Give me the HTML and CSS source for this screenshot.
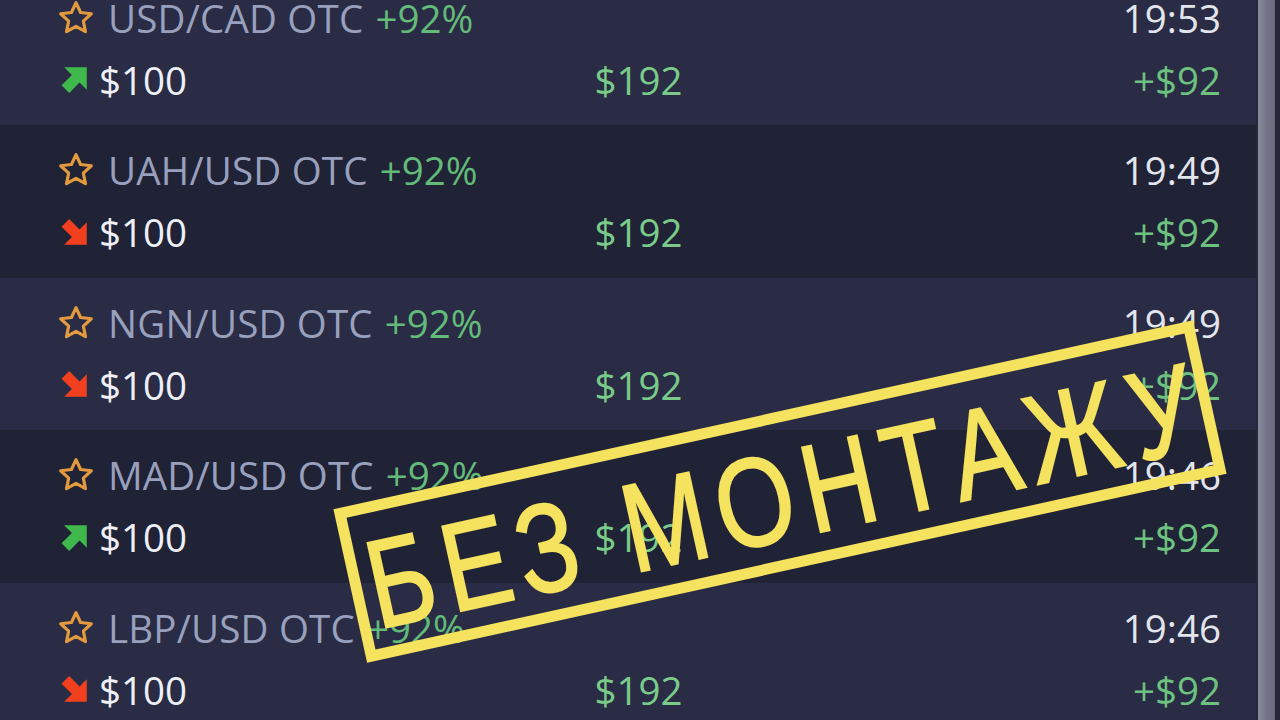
FILE: index.html
```html
<!DOCTYPE html>
<html lang="uk">
<head>
<meta charset="utf-8">
<title>Trades</title>
<link rel="stylesheet" href="styles.css">
</head>
<body>
<div class="screen">
  <div class="trades">
    <div class="trade-list">
      <div class="trade light">
        <div class="line">
          <div class="asset">
            <svg class="star" viewBox="0 0 24 24"><path d="M12 2.8l2.75 5.9 6.45.75-4.8 4.4 1.3 6.35L12 17l-5.7 3.2 1.3-6.35-4.8-4.4 6.45-.75z"/></svg>
            <span class="pair">USD/CAD OTC</span><span class="pct">+92%</span>
          </div>
          <span class="time">19:53</span>
        </div>
        <div class="line deal">
          <div class="stake">
            <svg class="dir up" viewBox="0 0 24 24"><path d="M4 2.5h17.5V20l-5.6-5.6-8 8L2 16.5l8-8z"/></svg>
            <span class="amount">$100</span>
          </div>
          <span class="payout">$192</span>
          <span class="profit">+$92</span>
        </div>
      </div>

      <div class="trade dark">
        <div class="line">
          <div class="asset">
            <svg class="star" viewBox="0 0 24 24"><path d="M12 2.8l2.75 5.9 6.45.75-4.8 4.4 1.3 6.35L12 17l-5.7 3.2 1.3-6.35-4.8-4.4 6.45-.75z"/></svg>
            <span class="pair">UAH/USD OTC</span><span class="pct">+92%</span>
          </div>
          <span class="time">19:49</span>
        </div>
        <div class="line deal">
          <div class="stake">
            <svg class="dir down" viewBox="0 0 24 24"><path d="M4 21.5h17.5V4l-5.6 5.6-8-8L2 7.5l8 8z"/></svg>
            <span class="amount">$100</span>
          </div>
          <span class="payout">$192</span>
          <span class="profit">+$92</span>
        </div>
      </div>

      <div class="trade light">
        <div class="line">
          <div class="asset">
            <svg class="star" viewBox="0 0 24 24"><path d="M12 2.8l2.75 5.9 6.45.75-4.8 4.4 1.3 6.35L12 17l-5.7 3.2 1.3-6.35-4.8-4.4 6.45-.75z"/></svg>
            <span class="pair">NGN/USD OTC</span><span class="pct">+92%</span>
          </div>
          <span class="time">19:49</span>
        </div>
        <div class="line deal">
          <div class="stake">
            <svg class="dir down" viewBox="0 0 24 24"><path d="M4 21.5h17.5V4l-5.6 5.6-8-8L2 7.5l8 8z"/></svg>
            <span class="amount">$100</span>
          </div>
          <span class="payout">$192</span>
          <span class="profit">+$92</span>
        </div>
      </div>

      <div class="trade dark">
        <div class="line">
          <div class="asset">
            <svg class="star" viewBox="0 0 24 24"><path d="M12 2.8l2.75 5.9 6.45.75-4.8 4.4 1.3 6.35L12 17l-5.7 3.2 1.3-6.35-4.8-4.4 6.45-.75z"/></svg>
            <span class="pair">MAD/USD OTC</span><span class="pct">+92%</span>
          </div>
          <span class="time">19:46</span>
        </div>
        <div class="line deal">
          <div class="stake">
            <svg class="dir up" viewBox="0 0 24 24"><path d="M4 2.5h17.5V20l-5.6-5.6-8 8L2 16.5l8-8z"/></svg>
            <span class="amount">$100</span>
          </div>
          <span class="payout">$192</span>
          <span class="profit">+$92</span>
        </div>
      </div>

      <div class="trade light">
        <div class="line">
          <div class="asset">
            <svg class="star" viewBox="0 0 24 24"><path d="M12 2.8l2.75 5.9 6.45.75-4.8 4.4 1.3 6.35L12 17l-5.7 3.2 1.3-6.35-4.8-4.4 6.45-.75z"/></svg>
            <span class="pair">LBP/USD OTC</span><span class="pct">+92%</span>
          </div>
          <span class="time">19:46</span>
        </div>
        <div class="line deal">
          <div class="stake">
            <svg class="dir down" viewBox="0 0 24 24"><path d="M4 21.5h17.5V4l-5.6 5.6-8-8L2 7.5l8 8z"/></svg>
            <span class="amount">$100</span>
          </div>
          <span class="payout">$192</span>
          <span class="profit">+$92</span>
        </div>
      </div>
    </div>
  </div>
  <div class="scrollbar"><div class="thumb"></div></div>

  <div class="stamp"><span class="stamp-text">БЕЗ МОНТАЖУ</span></div>
</div>
</body>
</html>
```

FILE: styles.css
```css
html, body {
  margin: 0;
  padding: 0;
  height: 100%;
  overflow: hidden;
  background: #212338;
}

.screen {
  position: relative;
  display: flex;
  width: 1280px;
  height: 720px;
  overflow: hidden;
  font-family: "Open Sans", "Noto Sans", sans-serif;
  font-size: 38.5px;
  line-height: 52px;
}

.trades {
  flex: 1;
  overflow: hidden;
}

/* list scrolled a little past its first row */
.trade-list {
  display: flex;
  flex-direction: column;
  margin-top: -27.5px;
}

.trade {
  height: 152.5px;
  box-sizing: border-box;
  padding: 0 35px 0 56px;
  display: flex;
  flex-direction: column;
  justify-content: center;
  gap: 10px;
}

.trade.light { background: #292c44; }
.trade.dark  { background: #202236; }

.line {
  display: flex;
  align-items: center;
  justify-content: space-between;
  height: 52px;
}

.asset, .stake {
  display: flex;
  align-items: center;
}

.star {
  width: 40px;
  height: 40px;
  margin-right: 12px;
  fill: none;
  stroke: #e39a3f;
  stroke-width: 1.9;
  stroke-linejoin: round;
}

.pair { color: #98a0bd; letter-spacing: 0.2px; }
.pct { color: #62bb78; margin-left: 12px; }
.time { color: #e3e5ec; }

.deal {
  display: grid;
  grid-template-columns: 1fr auto 1fr;
}

.dir {
  width: 31px;
  height: 31px;
  margin: 0 9px 0 3px;
}
.dir.up { fill: #3fb94c; }
.dir.down { fill: #f2401f; }

.amount { color: #eef0f5; }
.payout { color: #7acb89; }
.profit { color: #6cc27e; justify-self: end; }

.scrollbar {
  width: 24px;
  background: #262838;
  display: flex;
  padding: 0 5px 0 2px;
  box-sizing: border-box;
}
.thumb {
  flex: 1;
  background: linear-gradient(90deg, #8a8b9c, #737487 50%, #6a6b7e);
}

/* rubber stamp laid over the list */
.stamp {
  position: absolute;
  left: 340px;
  top: 413px;
  width: 880px;
  height: 157px;
  box-sizing: border-box;
  border: 11px solid #f5e25e;
  transform: rotate(-12.4deg);
  display: flex;
  align-items: center;
  justify-content: center;
}

.stamp-text {
  font-family: "Liberation Sans", "DejaVu Sans", sans-serif;
  font-size: 126px;
  line-height: 1;
  letter-spacing: 13px;
  color: #f5e25e;
  -webkit-text-stroke: 2px #f5e25e;
  white-space: nowrap;
  margin-top: 10px;
  margin-left: 10px;
  transform: scaleX(0.8);
}
```
